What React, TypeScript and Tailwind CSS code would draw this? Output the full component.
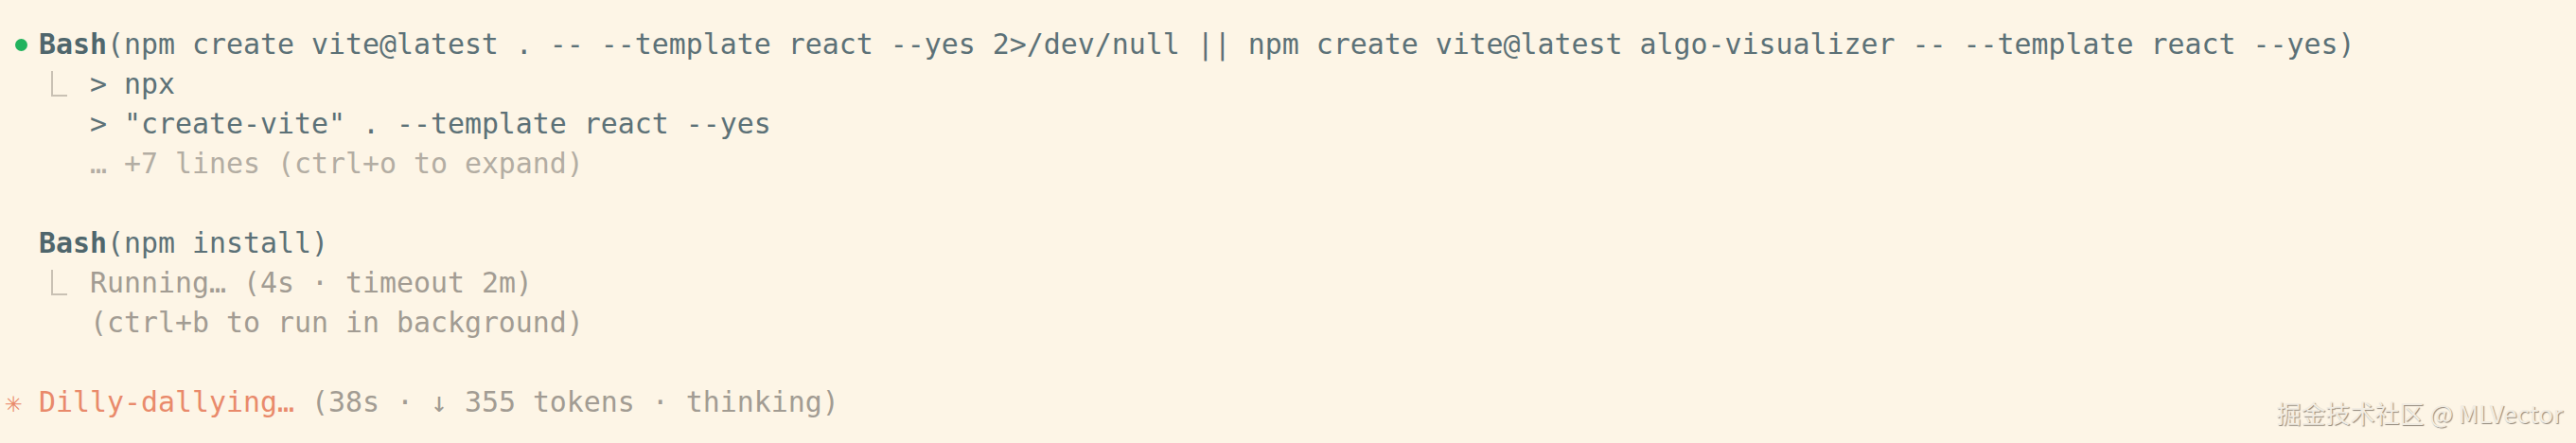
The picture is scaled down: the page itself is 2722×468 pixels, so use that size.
import React from "react";

const mono = "font-['DejaVu_Sans_Mono',monospace]";

function Corner() {
  return (
    <span className="inline-block align-top w-[2ch] h-[42px] pt-[7px]">
      <span className="block ml-[13px] w-[17px] h-[27px] border-l-2 border-b-2 border-[#c9c1b4]" />
    </span>
  );
}

export default function App() {
  return (
    <div className="relative w-[2722px] h-[468px] overflow-hidden bg-[#fdf5e6]">
      <div className={`${mono} text-[29.9px] leading-[42px] pt-[26px] pl-[5px] whitespace-pre text-[#5c7177]`}>
        {/* first tool call */}
        <div className="h-[42px]">
          <span className="inline-flex w-[2ch] h-[42px] align-top items-center justify-center">
            <span className="block w-[13px] h-[13px] rounded-full bg-[#22b35e]" />
          </span>
          <span className="font-bold text-[#4f666c]">Bash</span>
          (npm create vite@latest . -- --template react --yes 2&gt;/dev/null || npm create vite@latest algo-visualizer -- --template react --yes)
        </div>
        <div className="h-[42px]">
          {"  "}
          <Corner />
          {" > npx"}
        </div>
        <div className="h-[42px]">{'     > "create-vite" . --template react --yes'}</div>
        <div className="h-[42px] text-[#b3ada3]">{"     … +7 lines (ctrl+o to expand)"}</div>
        <div className="h-[42px]" />

        {/* second tool call */}
        <div className="h-[42px]">
          {"  "}
          <span className="font-bold text-[#4f666c]">Bash</span>
          (npm install)
        </div>
        <div className="h-[42px] text-[#a29c93]">
          {"  "}
          <Corner />
          {" Running… (4s · timeout 2m)"}
        </div>
        <div className="h-[42px] text-[#a29c93]">{"     (ctrl+b to run in background)"}</div>
        <div className="h-[42px]" />

        {/* status */}
        <div className="h-[42px] text-[#a29c93]">
          <span className="text-[#e98a6b]">{"✳ Dilly-dallying…"}</span>
          {" (38s · ↓ 355 tokens · thinking)"}
        </div>
      </div>

      {/* watermark */}
      <div className="absolute right-[14px] bottom-[19px] font-['Noto_Sans_CJK_SC',sans-serif] text-[26px] leading-none text-[#f1ece2] [text-shadow:1px_1px_1px_rgba(60,50,40,0.55)]">
        掘金技术社区 @ MLVector
      </div>
    </div>
  );
}
